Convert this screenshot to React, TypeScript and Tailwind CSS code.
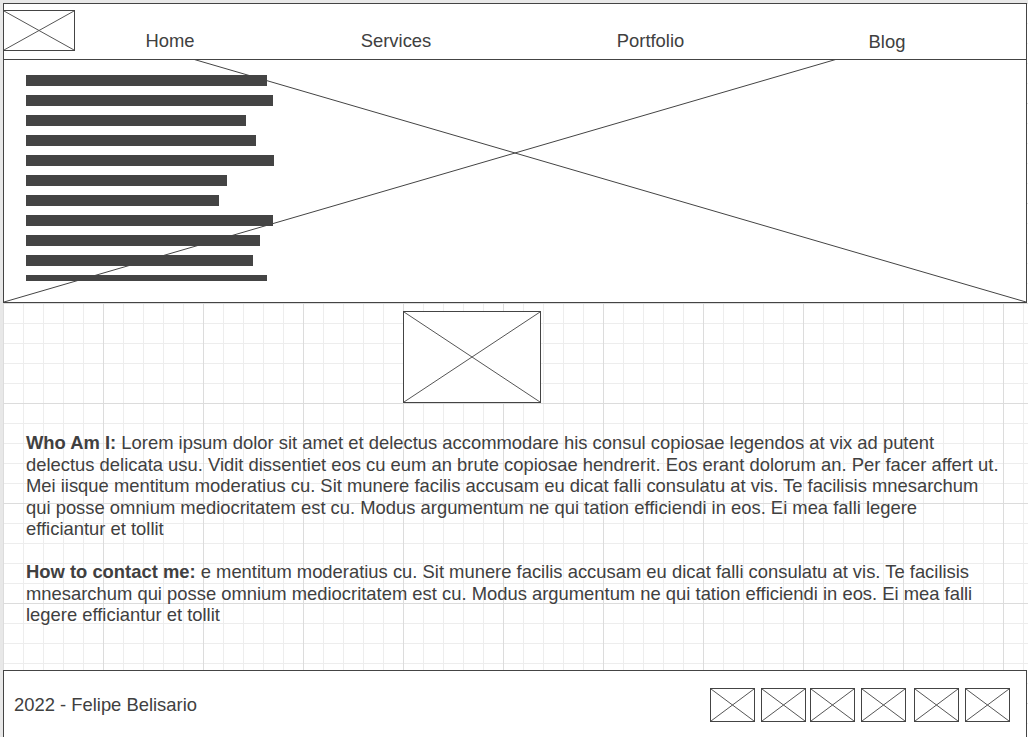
import React from "react";

function XBox({ className = "" }: { className?: string }) {
  return (
    <div className={`relative border border-[#444444] bg-white ${className}`}>
      <svg className="absolute inset-0 h-full w-full" viewBox="0 0 100 100" preserveAspectRatio="none">
        <line x1="0" y1="0" x2="100" y2="100" stroke="#555555" strokeWidth="1" vectorEffect="non-scaling-stroke" />
        <line x1="0" y1="100" x2="100" y2="0" stroke="#555555" strokeWidth="1" vectorEffect="non-scaling-stroke" />
      </svg>
    </div>
  );
}

const bars = [241, 247, 220, 230, 248, 201, 193, 247, 234, 227, 241];

export default function App() {
  return (
    <div className="w-[1028px] h-[737px] overflow-hidden bg-[#e8e8e8] pl-[3px] pt-[3px] font-['Liberation_Sans',Arial,sans-serif] text-[#404040]">
      <div className="flex h-[740px] w-[1025px] flex-col bg-white bg-[linear-gradient(to_right,#dcdcdc_1px,transparent_1px),linear-gradient(to_bottom,#dcdcdc_1px,transparent_1px),linear-gradient(to_right,#ededed_1px,transparent_1px),linear-gradient(to_bottom,#ededed_1px,transparent_1px)] bg-[size:100px_100px,100px_100px,20px_20px,20px_20px]">
        {/* Header */}
        <div className="relative h-[300px] w-[1024px] shrink-0 border border-[#444444] bg-white">
          <svg className="absolute inset-0 h-full w-full" viewBox="0 0 100 100" preserveAspectRatio="none">
            <line x1="0" y1="0" x2="100" y2="100" stroke="#444444" strokeWidth="1" vectorEffect="non-scaling-stroke" />
            <line x1="0" y1="100" x2="100" y2="0" stroke="#444444" strokeWidth="1" vectorEffect="non-scaling-stroke" />
          </svg>
          <nav className="relative z-10 flex h-[56px] items-start border-b border-[#444444] bg-white">
            <XBox className="ml-[-1px] mt-[6px] h-[41px] w-[72px] shrink-0" />
            <div className="flex w-[190px] justify-center pt-[26px] text-[18.4px] leading-[21px]">Home</div>
            <div className="flex w-[262px] justify-center pt-[26px] text-[18.4px] leading-[21px]">Services</div>
            <div className="flex w-[247px] justify-center pt-[26px] text-[18.4px] leading-[21px]">Portfolio</div>
            <div className="flex w-[226px] justify-center pt-[27px] text-[18.4px] leading-[21px]">Blog</div>
          </nav>
          <div className="relative z-10 ml-[22px] mt-[15px] flex h-[206px] flex-col gap-[9px] overflow-hidden">
            {bars.map((w, i) => (
              <div key={i} className="h-[11px] shrink-0 bg-[#444444]" style={{ width: w }} />
            ))}
          </div>
        </div>

        {/* Content */}
        <div className="h-[367px] shrink-0">
          <XBox className="ml-[400px] mt-[8px] h-[92px] w-[138px]" />
          <div className="ml-[23px] mt-[29px] w-[990px] whitespace-nowrap text-[18.4px] leading-[21.6px]">
            <p>
              <b>Who Am I:</b> Lorem ipsum dolor sit amet et delectus accommodare his consul copiosae legendos at vix ad putent
              <br />
              delectus delicata usu. Vidit dissentiet eos cu eum an brute copiosae hendrerit. Eos erant dolorum an. Per facer affert ut.
              <br />
              Mei iisque mentitum moderatius cu. Sit munere facilis accusam eu dicat falli consulatu at vis. Te facilisis mnesarchum
              <br />
              qui posse omnium mediocritatem est cu. Modus argumentum ne qui tation efficiendi in eos. Ei mea falli legere
              <br />
              efficiantur et tollit
            </p>
            <p className="mt-[21px]">
              <b>How to contact me:</b> e mentitum moderatius cu. Sit munere facilis accusam eu dicat falli consulatu at vis. Te facilisis
              <br />
              mnesarchum qui posse omnium mediocritatem est cu. Modus argumentum ne qui tation efficiendi in eos. Ei mea falli
              <br />
              legere efficiantur et tollit
            </p>
          </div>
        </div>

        {/* Footer */}
        <div className="flex h-[80px] w-[1024px] shrink-0 items-start border border-[#444444] bg-white pt-[17px]">
          <div className="flex h-[33px] items-center pl-[10px] text-[18.4px]">2022 - Felipe Belisario</div>
          <div className="ml-auto mr-[16px] flex">
            <XBox className="h-[34px] w-[45px]" />
            <XBox className="ml-[6px] h-[34px] w-[45px]" />
            <XBox className="ml-[4px] h-[34px] w-[45px]" />
            <XBox className="ml-[6px] h-[34px] w-[45px]" />
            <XBox className="ml-[8px] h-[34px] w-[45px]" />
            <XBox className="ml-[6px] h-[34px] w-[45px]" />
          </div>
        </div>
      </div>
    </div>
  );
}
